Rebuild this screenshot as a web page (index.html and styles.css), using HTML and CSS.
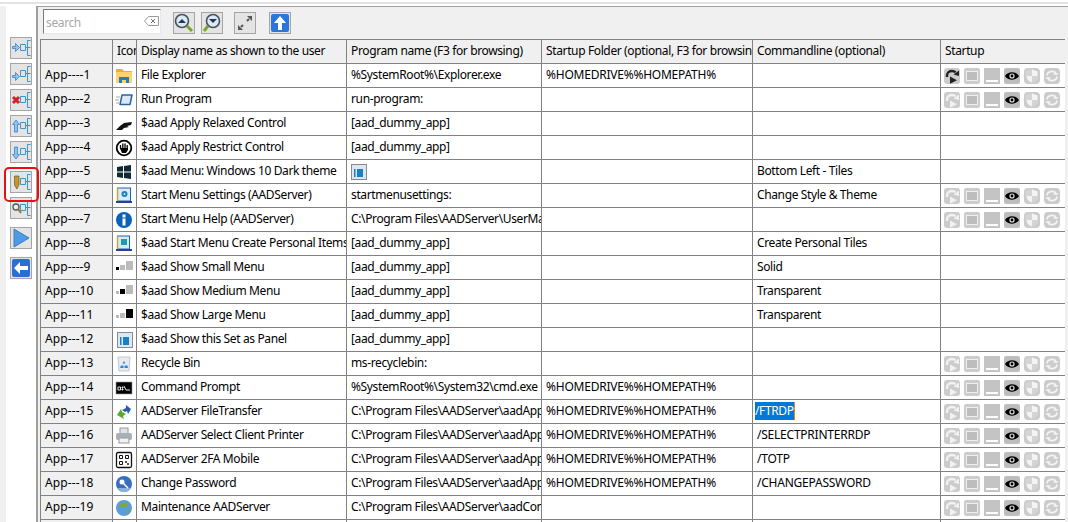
FILE: index.html
```html
<!DOCTYPE html>
<html lang="en">
<head>
<meta charset="utf-8">
<title>Applications</title>
<link rel="stylesheet" href="styles.css">
</head>
<body>
<svg class="defs" width="0" height="0" aria-hidden="true">
<defs>
<symbol id="tree" viewBox="0 0 22 22"><path d="M10.500 7.500h5v6h-5zM15.500 10.500h2M17.500 3.500v15M17.500 3.500h3M17.500 18.500h3M17.500 10.500h3" fill="none" stroke="#3a96cc" stroke-width="1"/></symbol>
<symbol id="s-run" viewBox="0 0 16 16"><rect width="16" height="16" rx="3" fill="#ccc"/><path d="M3 9V7.500C3 4.500 5.500 3 8 3c1.500 0 2.800.5 3.600 1.300" fill="none" stroke="currentColor" stroke-width="2.400"/><path d="M9.500 6.500L15 2.500v5.500zM6 8.500l7 3.700-7 3.500z" fill="currentColor"/></symbol>
<symbol id="s-win" viewBox="0 0 16 16"><rect width="16" height="16" rx="2" fill="#ccc"/><rect x="2.500" y="3.500" width="11" height="9" fill="#bdbdbd" stroke="#efefef"/></symbol>
<symbol id="s-min" viewBox="0 0 16 16"><rect width="16" height="16" fill="#c4c4c4"/><rect x="2" y="12" width="12" height="2" fill="#fff"/></symbol>
<symbol id="s-eye" viewBox="0 0 16 16"><rect width="16" height="16" rx="2" fill="#bdbdbd"/><path d="M1 8c3-5 11-5 14 0-3 5-11 5-14 0z" fill="#000"/><circle cx="8" cy="8" r="2.600" fill="#ddd"/><circle cx="8" cy="8" r="1.400" fill="#000"/></symbol>
<symbol id="s-shield" viewBox="0 0 16 16"><rect width="16" height="16" rx="4" fill="#ccc"/><path d="M8 1.500l5.500 2v4.500c0 3.300-2.300 5.300-5.500 6.500-3.200-1.200-5.500-3.200-5.500-6.500V3.500z" fill="#f4f4f4"/><path d="M8 1.500V8H2.500V3.500zM8 8h5.500c0 3.300-2.300 5.300-5.500 6.500z" fill="#d4d4d4"/></symbol>
<symbol id="s-sync" viewBox="0 0 16 16"><rect width="16" height="16" rx="4" fill="#ccc"/><path d="M3 7.500a5 4 0 0 1 9-2.500M13 8.500a5 4 0 0 1-9 2.500M9.500 6h4.500M2 10h4.500" fill="none" stroke="#f4f4f4" stroke-width="1.600"/></symbol>
<symbol id="panel" viewBox="0 0 16 16"><rect x=".5" y=".5" width="15" height="15" fill="#dbe8f4" stroke="#8a8a8a"/><rect x="3" y="5" width="1.500" height="8" fill="#1a80c4"/><rect x="6" y="5" width="6" height="8" fill="#1a80c4"/></symbol>
</defs>
</svg>
<div class="topline"></div>
<div class="main">
  <aside class="side">
    <button class="sbtn"><svg class="ic22"><use href="#tree"/><path d="M2.500 9.500h3v-3l4 4-4 4v-3h-3z" fill="#8cc4ee" stroke="#3a80c8" stroke-width=".8"/></svg></button>
    <button class="sbtn"><svg class="ic22"><use href="#tree"/><path d="M2.500 12.500h3v-3l4 4-4 4v-3h-3z" fill="#8cc4ee" stroke="#3a80c8" stroke-width=".8"/></svg></button>
    <button class="sbtn"><svg class="ic22"><use href="#tree"/><path d="M3 8l6 6M9 8l-6 6" stroke="#d0202a" stroke-width="3"/></svg></button>
    <button class="sbtn"><svg class="ic22"><use href="#tree"/><path d="M6 5l3.500 4.500h-2V17h-3V9.500h-2z" fill="#8cc4ee" stroke="#3a80c8" stroke-width=".8"/></svg></button>
    <button class="sbtn"><svg class="ic22"><use href="#tree"/><path d="M6 18l3.500-4.500h-2V6h-3v7.500h-2z" fill="#8cc4ee" stroke="#3a80c8" stroke-width=".8"/></svg></button>
    <button class="sbtn gap"><svg class="ic22"><use href="#tree"/><path d="M4.500 5h4.500v9l-2.200 4-2.300-4z" fill="#c8962e" stroke="#6b5a2a" stroke-width=".7"/></svg></button>
    <button class="sbtn"><svg class="ic22"><use href="#tree"/><circle cx="6" cy="10" r="3" fill="#eee" stroke="#555" stroke-width="1.300"/><path d="M8 12l3 4" stroke="#9a7a2a" stroke-width="2"/></svg></button>
    <button class="sbtn gap"><svg class="ic22"><path d="M4 2l15 9-15 9z" fill="#4d9be6" stroke="#3b7fc0"/></svg></button>
    <button class="sbtn gap"><svg class="ic22"><rect x="2" y="2" width="18" height="18" rx="2" fill="#2a6fd6"/><path d="M4 11l6-6v4h8v4h-8v4z" fill="#fff"/></svg></button>
    <div class="mark"></div>
  </aside>
  <section class="content">
    <div class="toolbar">
      <div class="search"><span class="search-text">search</span><svg class="clear" viewBox="0 0 15 10"><path d="M4.500.5h10v9h-10L.5 5z" fill="none" stroke="#999"/><path d="M7 3l4 4M11 3l-4 4" stroke="#777"/></svg></div>
      <button class="tbtn t1"><svg class="ic22"><circle cx="9" cy="9" r="6.500" fill="#dbe8f7" stroke="#45515e" stroke-width="1.600"/><path d="M5 11l4-4 4 4z" fill="#25364d"/><path d="M14 14l5 5" stroke="#78a82a" stroke-width="3"/></svg></button>
      <button class="tbtn t2"><svg class="ic22"><circle cx="12" cy="9" r="6.500" fill="#dbe8f7" stroke="#45515e" stroke-width="1.600"/><path d="M8 7l4 4 4-4z" fill="#25364d"/><path d="M7 14l-4 5" stroke="#78a82a" stroke-width="3"/></svg></button>
      <button class="tbtn t3"><svg class="ic22"><path d="M13 4h5v5zM4 18v-5l5 5z" fill="#555"/><path d="M7 15l2-2M13 9l2-2" stroke="#555" stroke-width="2"/></svg></button>
      <button class="tbtn t4"><svg class="ic22"><rect x="2" y="2" width="18" height="18" rx="2" fill="#2a76dc"/><path d="M11 4l6 7h-4v7H9v-7H5z" fill="#fff"/></svg></button>
    </div>
    <div class="grid-wrap">
      <table class="grid">
        <colgroup><col class="c0"><col class="c1"><col class="c2"><col class="c3"><col class="c4"><col class="c5"><col class="c6"></colgroup>
        <thead><tr><th class="rh"></th><th>Icon</th><th>Display name as shown to the user</th><th>Program name (F3 for browsing)</th><th>Startup Folder (optional, F3 for browsing)</th><th>Commandline (optional)</th><th>Startup</th></tr></thead>
        <tbody>
<tr><th class="rh">App----1</th><td class="ico"><svg class="ic18" viewBox="0 0 18 18"><path d="M1 2h6l2 2h8v12H1z" fill="#e8b030"/><path d="M1 5h16v11H1z" fill="#fbd46a"/><path d="M4 16v-6h10v6h-3v-3H7v3z" fill="#1e7fd0"/></svg></td><td>File Explorer</td><td>%SystemRoot%\Explorer.exe</td><td class="caps">%HOMEDRIVE%%HOMEPATH%</td><td></td><td class="st first"><svg><use href="#s-run"/></svg><svg><use href="#s-win"/></svg><svg><use href="#s-min"/></svg><svg><use href="#s-eye"/></svg><svg><use href="#s-shield"/></svg><svg><use href="#s-sync"/></svg></td></tr>
<tr><th class="rh">App----2</th><td class="ico"><svg class="ic18" viewBox="0 0 18 18"><path d="M1 6h4M0 9h4M1 12h3" stroke="#aaa"/><path d="M7 4h10l-2 9.500H5z" fill="#dce8f5" stroke="#2a62a8" stroke-width="1.500" stroke-linejoin="round"/></svg></td><td>Run Program</td><td>run-program:</td><td></td><td></td><td class="st"><svg><use href="#s-run"/></svg><svg><use href="#s-win"/></svg><svg><use href="#s-min"/></svg><svg><use href="#s-eye"/></svg><svg><use href="#s-shield"/></svg><svg><use href="#s-sync"/></svg></td></tr>
<tr><th class="rh">App----3</th><td class="ico"><svg class="ic18" viewBox="0 0 18 18"><path d="M1 15l4-4 4-3 8-1-1 3-4 1 2 1-5 1-2 2H4z" fill="#111"/></svg></td><td>$aad Apply Relaxed Control</td><td>[aad_dummy_app]</td><td></td><td></td><td></td></tr>
<tr><th class="rh">App----4</th><td class="ico"><svg class="ic18" viewBox="0 0 18 18"><circle cx="9" cy="9" r="7.300" fill="#fff" stroke="#000" stroke-width="1.800"/><path d="M5.500 10V6M7.800 10V4.500M10 10V4.500M12.200 10V6" stroke="#000" stroke-width="1.300"/><path d="M4.800 9h8.200v2l-2 3H7z" fill="#000"/></svg></td><td>$aad Apply Restrict Control</td><td>[aad_dummy_app]</td><td></td><td></td><td></td></tr>
<tr><th class="rh">App----5</th><td class="ico"><svg class="ic18" viewBox="0 0 18 18"><path d="M2 4l6-1v5.500H2zM9 3l7-1v6.500H9zM2 9.500h6V15l-6-1zM9 9.500h7V16l-7-1z" fill="#0e2a33"/></svg></td><td>$aad Menu: Windows 10 Dark theme</td><td class="ico-l"><svg class="ic16"><use href="#panel"/></svg></td><td></td><td>Bottom Left - Tiles</td><td></td></tr>
<tr><th class="rh">App----6</th><td class="ico"><svg class="ic18" viewBox="0 0 18 18"><rect x="2.500" y="1" width="13" height="13" fill="#dce9f6" stroke="#1a64b8"/><rect x="1" y="14" width="16" height="2" fill="#2a3fa0"/><circle cx="9.500" cy="7" r="3" fill="#1a80c4"/><circle cx="9.500" cy="7" r="1" fill="#dce9f6"/><path d="M2.500 1v13" stroke="#c8a830" stroke-width="1.500"/></svg></td><td>Start Menu Settings (AADServer)</td><td>startmenusettings:</td><td></td><td>Change Style &amp; Theme</td><td class="st"><svg><use href="#s-run"/></svg><svg><use href="#s-win"/></svg><svg><use href="#s-min"/></svg><svg><use href="#s-eye"/></svg><svg><use href="#s-shield"/></svg><svg><use href="#s-sync"/></svg></td></tr>
<tr><th class="rh">App----7</th><td class="ico"><svg class="ic18" viewBox="0 0 18 18"><circle cx="9" cy="9" r="8" fill="#0c62b8"/><rect x="7.500" y="7.500" width="3" height="7" fill="#fff"/><rect x="7.500" y="3.500" width="3" height="3" fill="#fff"/></svg></td><td>Start Menu Help (AADServer)</td><td>C:\Program Files\AADServer\UserManual.pdf</td><td></td><td></td><td class="st"><svg><use href="#s-run"/></svg><svg><use href="#s-win"/></svg><svg><use href="#s-min"/></svg><svg><use href="#s-eye"/></svg><svg><use href="#s-shield"/></svg><svg><use href="#s-sync"/></svg></td></tr>
<tr><th class="rh">App----8</th><td class="ico"><svg class="ic18" viewBox="0 0 18 18"><rect x="2.500" y="1" width="12" height="13" fill="#dce9f6" stroke="#1a64b8"/><rect x="1" y="14" width="16" height="2" fill="#2a3fa0"/><rect x="6" y="4" width="6" height="6" fill="#18a0a8"/><path d="M2.500 1v13" stroke="#c8a830" stroke-width="1.500"/></svg></td><td>$aad Start Menu Create Personal Items</td><td>[aad_dummy_app]</td><td></td><td>Create Personal Tiles</td><td></td></tr>
<tr><th class="rh">App----9</th><td class="ico"><svg class="ic18" viewBox="0 0 18 18"><rect x="1" y="8" width="3" height="3" fill="#000"/><rect x="5" y="6" width="5" height="5" fill="#bbb"/><rect x="11" y="2" width="7" height="9" fill="#bbb"/></svg></td><td>$aad Show Small Menu</td><td>[aad_dummy_app]</td><td></td><td>Solid</td><td></td></tr>
<tr><th class="rh">App---10</th><td class="ico"><svg class="ic18" viewBox="0 0 18 18"><rect x="1" y="8" width="3" height="3" fill="#bbb"/><rect x="5" y="6" width="5" height="5" fill="#000"/><rect x="11" y="2" width="7" height="9" fill="#bbb"/></svg></td><td>$aad Show Medium Menu</td><td>[aad_dummy_app]</td><td></td><td>Transparent</td><td></td></tr>
<tr><th class="rh">App---11</th><td class="ico"><svg class="ic18" viewBox="0 0 18 18"><rect x="1" y="8" width="3" height="3" fill="#bbb"/><rect x="5" y="6" width="5" height="5" fill="#bbb"/><rect x="11" y="2" width="7" height="9" fill="#000"/></svg></td><td>$aad Show Large Menu</td><td>[aad_dummy_app]</td><td></td><td>Transparent</td><td></td></tr>
<tr><th class="rh">App---12</th><td class="ico"><svg class="ic16"><use href="#panel"/></svg></td><td>$aad Show this Set as Panel</td><td>[aad_dummy_app]</td><td></td><td></td><td></td></tr>
<tr><th class="rh">App---13</th><td class="ico"><svg class="ic18" viewBox="0 0 18 18"><path d="M3 2h12l-1 14H4z" fill="#e8ecf0" stroke="#c4c8cc"/><path d="M9 6l1.500 2.500h-3zM6 10.500h2.500V13H5zM12.500 10.500l.5 2.500H9.500v-2.500z" fill="#2a8ad8"/></svg></td><td>Recycle Bin</td><td>ms-recyclebin:</td><td></td><td></td><td class="st"><svg><use href="#s-run"/></svg><svg><use href="#s-win"/></svg><svg><use href="#s-min"/></svg><svg><use href="#s-eye"/></svg><svg><use href="#s-shield"/></svg><svg><use href="#s-sync"/></svg></td></tr>
<tr><th class="rh">App---14</th><td class="ico"><svg class="ic18" viewBox="0 0 18 18"><rect x="1" y="3" width="16" height="12" fill="#000" stroke="#999" stroke-width=".6"/><path d="M3 8h2.500v3H3zM7 8h1v1H7zM7 10h1v1H7zM9 7l2 4h4" stroke="#fff" stroke-width=".9" fill="none"/></svg></td><td>Command Prompt</td><td>%SystemRoot%\System32\cmd.exe</td><td class="caps">%HOMEDRIVE%%HOMEPATH%</td><td></td><td class="st"><svg><use href="#s-run"/></svg><svg><use href="#s-win"/></svg><svg><use href="#s-min"/></svg><svg><use href="#s-eye"/></svg><svg><use href="#s-shield"/></svg><svg><use href="#s-sync"/></svg></td></tr>
<tr><th class="rh">App---15</th><td class="ico"><svg class="ic18" viewBox="0 0 18 18"><path d="M2 12l4-6 1 3 4 2-3 2 1 3z" fill="#5aa82a"/><path d="M16 6l-5-4v3L7 7l3 2 2-1 1 3z" fill="#2a5aa8"/></svg></td><td>AADServer FileTransfer</td><td>C:\Program Files\AADServer\aadApp.exe</td><td class="caps">%HOMEDRIVE%%HOMEPATH%</td><td class="selcell"><span class="sel">/FTRDP</span></td><td class="st"><svg><use href="#s-run"/></svg><svg><use href="#s-win"/></svg><svg><use href="#s-min"/></svg><svg><use href="#s-eye"/></svg><svg><use href="#s-shield"/></svg><svg><use href="#s-sync"/></svg></td></tr>
<tr><th class="rh">App---16</th><td class="ico"><svg class="ic18" viewBox="0 0 18 18"><rect x="5" y="1" width="8" height="6" fill="#dfe3e8" stroke="#999"/><rect x="1" y="6" width="16" height="7" rx="2" fill="#a8b0b8"/><rect x="4" y="11" width="10" height="5" fill="#f2f2f2" stroke="#999"/></svg></td><td>AADServer Select Client Printer</td><td>C:\Program Files\AADServer\aadApp.exe</td><td class="caps">%HOMEDRIVE%%HOMEPATH%</td><td class="caps">/SELECTPRINTERRDP</td><td class="st"><svg><use href="#s-run"/></svg><svg><use href="#s-win"/></svg><svg><use href="#s-min"/></svg><svg><use href="#s-eye"/></svg><svg><use href="#s-shield"/></svg><svg><use href="#s-sync"/></svg></td></tr>
<tr><th class="rh">App---17</th><td class="ico"><svg class="ic18" viewBox="0 0 18 18"><rect x="1.500" y="1.500" width="15" height="15" rx="1.500" fill="#fff" stroke="#111" stroke-width="1.300"/><path d="M4.500 4.500h3v3h-3zM10.500 4.500h3v3h-3zM4.500 10.500h3v3h-3z" fill="none" stroke="#111"/><path d="M10 10h2v2h-2zM12 12h2v2h-2z" fill="#555"/></svg></td><td>AADServer 2FA Mobile</td><td>C:\Program Files\AADServer\aadApp.exe</td><td class="caps">%HOMEDRIVE%%HOMEPATH%</td><td class="caps">/TOTP</td><td class="st"><svg><use href="#s-run"/></svg><svg><use href="#s-win"/></svg><svg><use href="#s-min"/></svg><svg><use href="#s-eye"/></svg><svg><use href="#s-shield"/></svg><svg><use href="#s-sync"/></svg></td></tr>
<tr><th class="rh">App---18</th><td class="ico"><svg class="ic18" viewBox="0 0 18 18"><circle cx="9" cy="9" r="8" fill="#3a6fc0"/><path d="M2 13a8 8 0 0 0 14 0z" fill="#8ab0e0"/><circle cx="7" cy="7" r="2.500" fill="#fff"/><path d="M8 8l5 5" stroke="#fff" stroke-width="1.500"/></svg></td><td>Change Password</td><td>C:\Program Files\AADServer\aadApp.exe</td><td class="caps">%HOMEDRIVE%%HOMEPATH%</td><td class="caps">/CHANGEPASSWORD</td><td class="st"><svg><use href="#s-run"/></svg><svg><use href="#s-win"/></svg><svg><use href="#s-min"/></svg><svg><use href="#s-eye"/></svg><svg><use href="#s-shield"/></svg><svg><use href="#s-sync"/></svg></td></tr>
<tr><th class="rh">App---19</th><td class="ico"><svg class="ic18" viewBox="0 0 18 18"><circle cx="9" cy="9" r="8" fill="#5a9ee0"/><path d="M5 5c3-2 6-2 8 0 0 3-3 4-5 3s-3 1-4 0zM11 12l4-2-2 5z" fill="#7aaa3a"/></svg></td><td>Maintenance AADServer</td><td>C:\Program Files\AADServer\aadConsole.exe</td><td></td><td></td><td class="st"><svg><use href="#s-run"/></svg><svg><use href="#s-win"/></svg><svg><use href="#s-min"/></svg><svg><use href="#s-eye"/></svg><svg><use href="#s-shield"/></svg><svg><use href="#s-sync"/></svg></td></tr>
<tr><th class="rh"></th><td></td><td></td><td></td><td></td><td></td><td></td></tr>
        </tbody>
      </table>
    </div>
  </section>
</div>
</body>
</html>
```
FILE: styles.css
```css
* { box-sizing: border-box; }
html, body { margin: 0; height: 100%; overflow: hidden; background: #fff; }
body { font: 12px/16px "Noto Sans", sans-serif; letter-spacing: -0.37px; color: #000; }
.defs { position: absolute; }
.topline { height: 2px; margin: 2px 0; background: #e3e3e3; }
.main { display: flex; height: 516px; }
.side { position: relative; width: 38px; padding: 31px 0 0 4px; border-left: 6px solid #f0f0f0; border-right: 2px solid #a0a0a0; display: flex; flex-direction: column; gap: 4px; background: #fff; }
.sbtn, .tbtn { width: 22px; height: 22px; padding: 0; border: 1px solid #a5a5a5; background: #e4e4e4; display: block; flex: none; }
.sbtn.gap { margin-top: 4px; }
.ic22 { display: block; width: 22px; height: 22px; margin: -1px; }
.mark { position: absolute; left: -2px; top: 161px; width: 35px; height: 35px; border: 2px solid #e81010; border-radius: 5px; z-index: 1; }
.content { flex: 1; background: #f0f0f0; min-width: 0; border-top: 1px solid #a0a0a0; }
.toolbar { height: 32px; display: flex; align-items: flex-start; padding: 2px 0 0 5px; }
.search { width: 118px; height: 25px; background: #fff; border: 1px solid; border-color: #7a7a7a #e8e8e8 #e8e8e8 #7a7a7a; display: flex; align-items: center; justify-content: space-between; padding: 3px 1px 0 2px; }
.search-text { color: #a8a8a8; }
.clear { width: 15px; height: 10px; margin-top: -5px; }
.tbtn { margin-top: 3px; }
.t1 { margin-left: 12px; }
.t2 { margin-left: 6px; }
.t3 { margin-left: 11px; }
.t4 { margin-left: 13px; }
.grid-wrap { margin-left: 2px; margin-right: 3px; height: 484px; overflow: hidden; background: #fff; }
.grid { border-collapse: collapse; table-layout: fixed; width: 1025px; }
.c0 { width: 72px; } .c1 { width: 24px; } .c2 { width: 210px; } .c3 { width: 195px; }
.c4 { width: 211px; } .c5 { width: 188px; } .c6 { width: 125px; }
.grid th, .grid td { height: 24px; padding: 0 0 1px 4px; border: 1px solid #828282; font-weight: 400; text-align: left; white-space: nowrap; overflow: hidden; }
.grid thead th { height: 24px; background: #f0f0f0; }
.grid .rh { background: #f0f0f0; letter-spacing: 0.1px; }
.grid .caps { letter-spacing: -0.23px; }
.grid .ico { padding: 0 0 0 2px; }
.grid .ico-l { padding: 0 0 0 4px; }
.ic18 { display: block; width: 18px; height: 18px; }
.ic16 { display: block; width: 16px; height: 16px; }
.ico .ic16 { margin-left: 2px; }
.grid .st { padding: 0 0 0 3px; color: #f2f2f2; font-size: 0; }
.st svg { display: inline-block; width: 16px; height: 16px; margin-right: 4px; vertical-align: middle; }
.st.first svg:first-child { color: #222; }
.grid .selcell { padding-left: 2px; }
.sel { background: #0078d7; color: #fff; padding: 0 0 1px 0; border-right: 1px solid #f08020; }
```
